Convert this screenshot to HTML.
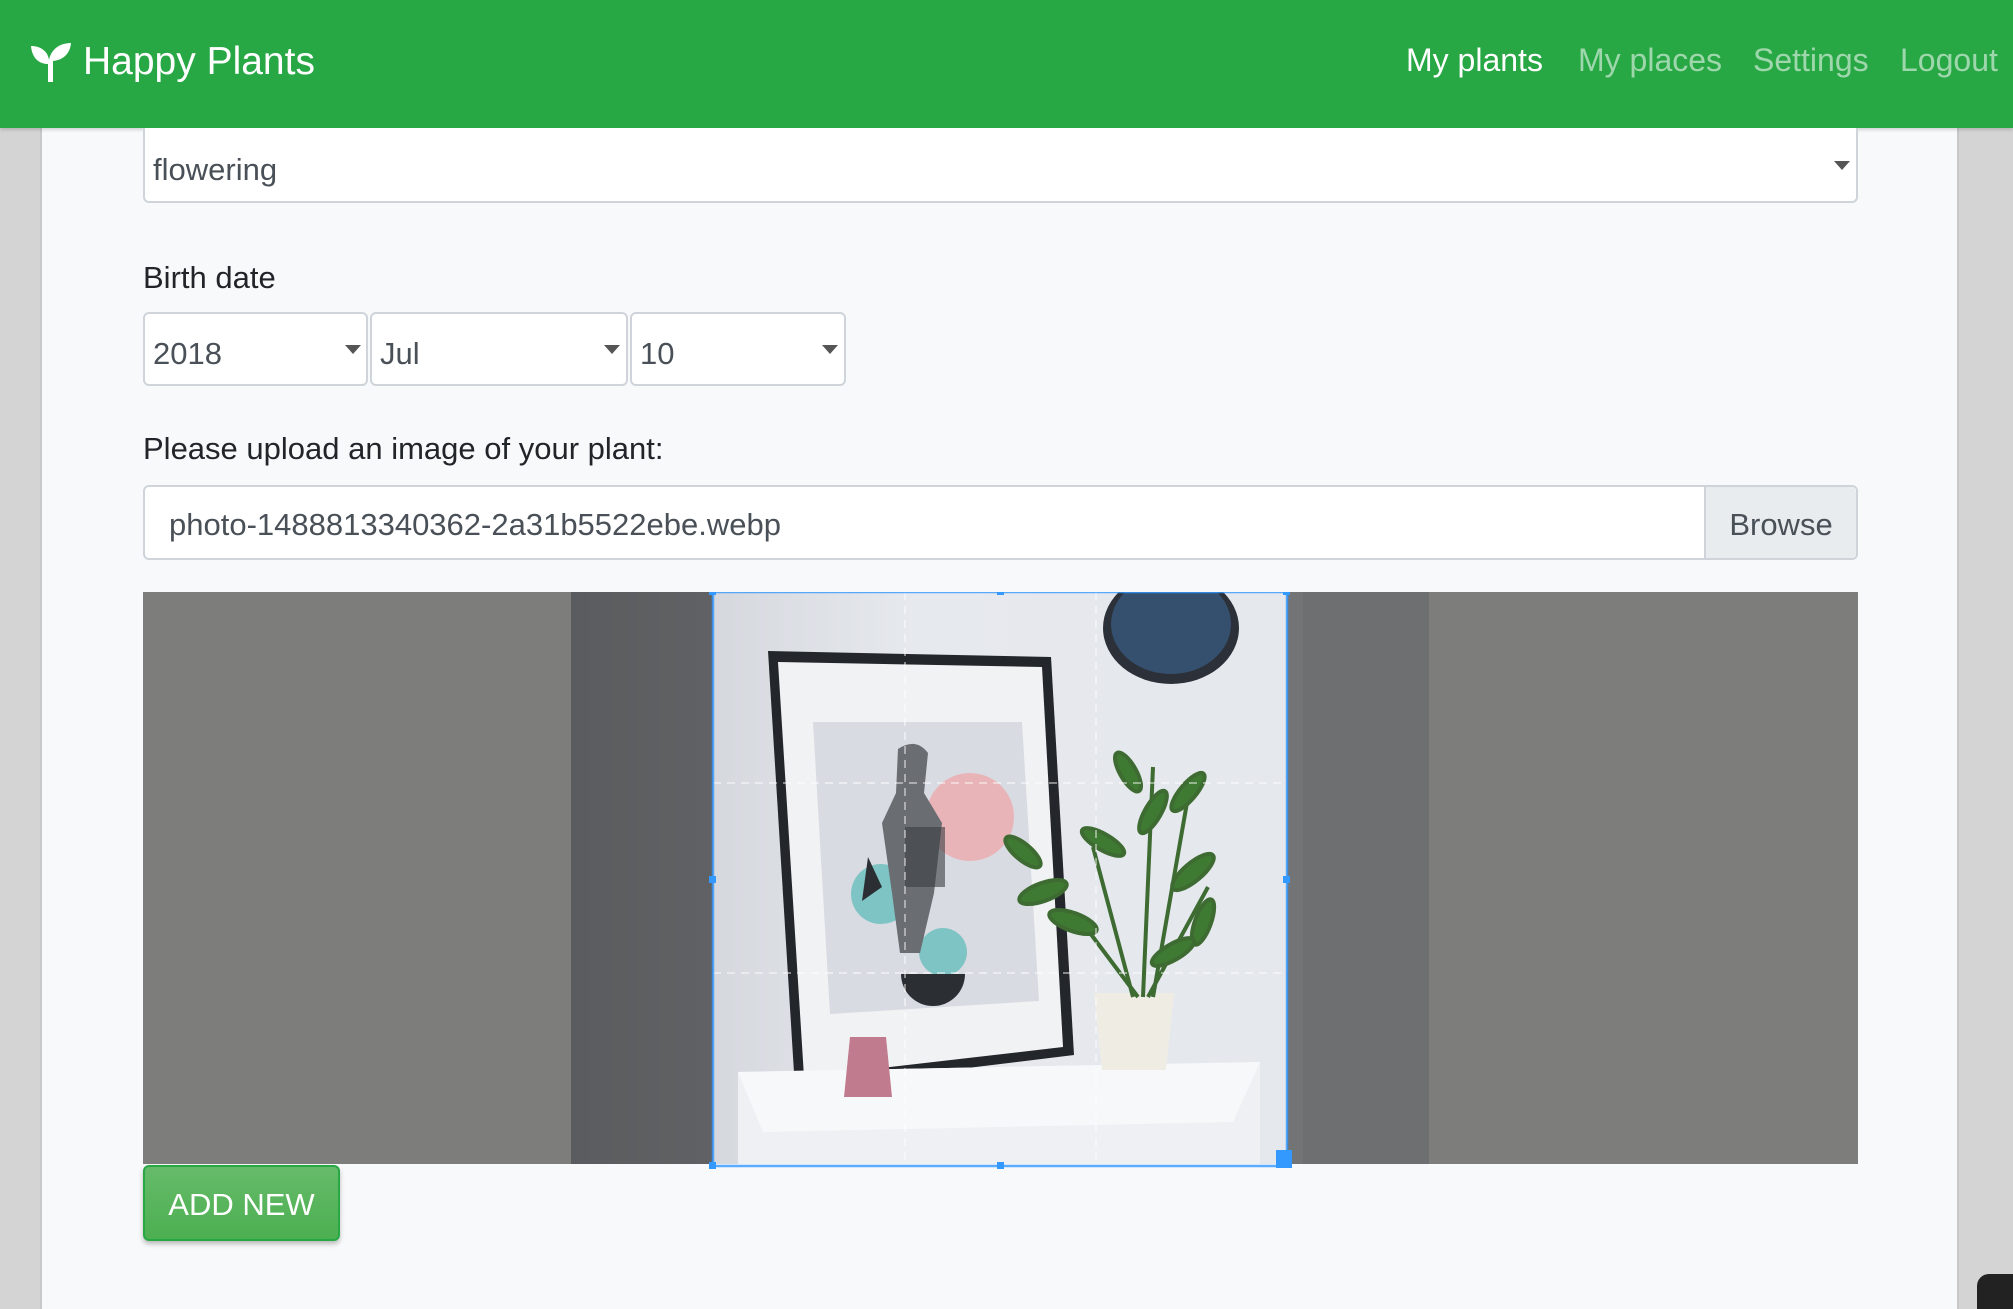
<!DOCTYPE html>
<html style="overflow:hidden;height:1309px"><head><meta charset="utf-8"><style>
*{box-sizing:border-box;margin:0;padding:0}
body{width:2013px;height:1309px;overflow:hidden;background:#d4d4d4;font-family:"Liberation Sans",sans-serif;position:relative}
.panel{position:absolute;left:40px;top:0;width:1919px;height:1309px;background:#f8f9fa;border-left:2px solid #c8c8c8;border-right:2px solid #c8c8c8}
.nav{position:absolute;left:0;top:0;width:2013px;height:128px;background:#28a745;box-shadow:0 2px 3px rgba(0,0,0,.15)}
.brand{position:absolute;left:83px;top:40px;color:#fff;font-size:39px}
.nl{position:absolute;top:42px;font-size:32px;color:rgba(255,255,255,.55)}
.box{position:absolute;background:#fff;border:2px solid #ced4da;border-radius:6px;font-size:31px;color:#495057;padding-left:8px;padding-top:10px;display:flex;align-items:center}
.arr{position:absolute;width:0;height:0;border-left:8px solid transparent;border-right:8px solid transparent;border-top:9px solid #555}
.lbl{position:absolute;left:143px;font-size:31px;color:#212529}
</style></head><body>
<div class="panel"></div>
<div class="nav">
<svg style="position:absolute;left:30px;top:42px" width="42" height="40" viewBox="0 0 42 40"><path d="M18 40V22C10 22 2 17 1 4 10 4 18 9 19 18 21 8 29 1 41 1 40 12 33 18 23 19V40Z" fill="#fff"/></svg>
<div class="brand">Happy Plants</div>
<div class="nl" style="left:1406px;color:#fff">My plants</div>
<div class="nl" style="left:1578px">My places</div>
<div class="nl" style="left:1753px">Settings</div>
<div class="nl" style="left:1900px">Logout</div>
</div>
<div class="box" style="left:143px;top:128px;width:1715px;height:75px;border-top:none;border-radius:0 0 6px 6px">flowering</div>
<div class="arr" style="left:1834px;top:161px"></div>
<div class="lbl" style="top:260px">Birth date</div>
<div class="box" style="left:143px;top:312px;width:225px;height:74px">2018</div>
<div class="arr" style="left:345px;top:345px"></div>
<div class="box" style="left:370px;top:312px;width:258px;height:74px">Jul</div>
<div class="arr" style="left:604px;top:345px"></div>
<div class="box" style="left:630px;top:312px;width:216px;height:74px">10</div>
<div class="arr" style="left:822px;top:345px"></div>
<div class="lbl" style="top:431px">Please upload an image of your plant:</div>
<div class="box" style="left:143px;top:485px;width:1715px;height:75px;padding-left:24px;padding-top:4px">photo-1488813340362-2a31b5522ebe.webp
<div style="position:absolute;right:0;top:0;height:71px;width:152px;background:#e9ecef;border-left:2px solid #ced4da;display:flex;align-items:center;justify-content:center;border-radius:0 5px 5px 0;padding-top:4px">Browse</div></div>
<svg style="position:absolute;left:143px;top:592px" width="1715" height="580" viewBox="0 0 1715 580">
<rect width="1715" height="572" fill="#7d7e7c"/>
<defs><linearGradient id="w" x1="0" x2="1"><stop offset="0" stop-color="#c9ccd2"/><stop offset=".4" stop-color="#e6e9ee"/><stop offset="1" stop-color="#e4e7ec"/></linearGradient></defs>
<rect x="428" width="858" height="572" fill="url(#w)"/>
<rect x="1160" width="126" height="572" fill="#dcdee2"/>
<ellipse cx="1028" cy="36" rx="68" ry="56" fill="#2c3038"/><ellipse cx="1028" cy="32" rx="60" ry="50" fill="#34506e"/>
<polygon points="625,59 908,65 931,463 652,497" fill="#23262b"/>
<polygon points="635,70 899,75 920,455 661,485" fill="#f1f2f4"/>
<polygon points="670,130 879,130 896,409 687,422" fill="#d8dbe2"/>
<circle cx="827" cy="225" r="44" fill="#e8b4b8"/>
<circle cx="738" cy="302" r="30" fill="#7ec4c4"/>
<circle cx="800" cy="360" r="24" fill="#7ec4c4"/>
<path d="M755 157q18-12 30 4l-4 40 18 30 -8 70 -14 60 -20 0 -8-60 -10-70 14-30z" fill="#6a6d72"/>
<path d="M762 235h40v60h-40z" fill="#3a3d42" opacity=".6"/>
<path d="M758 382h64a32 32 0 0 1-64 0z" fill="#2b2e33"/>
<path d="M725 265l14 30-20 14z" fill="#2b2e33"/>
<polygon points="595,480 1117,470 1117,572 595,572" fill="#eef0f3"/>
<polygon points="595,480 1117,470 1090,530 620,540" fill="#f7f8fa"/>
<path d="M707 445h36l6 60h-48z" fill="#c07c8e"/>
<path d="M951 401h80l-8 77h-64z" fill="#efece4"/>
<g stroke="#3d6b32" stroke-width="4" fill="#3f7a33">
<path d="M990 405l-40-150M1000 405l10-230M1010 405l35-200M995 405l-60-80M1005 405l60-110"/>
<ellipse cx="900" cy="300" rx="25" ry="9" transform="rotate(-20 900 300)"/><ellipse cx="930" cy="330" rx="25" ry="9" transform="rotate(20 930 330)"/>
<ellipse cx="1050" cy="280" rx="26" ry="9" transform="rotate(-40 1050 280)"/><ellipse cx="1010" cy="220" rx="24" ry="8" transform="rotate(-60 1010 220)"/>
<ellipse cx="1045" cy="200" rx="24" ry="8" transform="rotate(-50 1045 200)"/><ellipse cx="985" cy="180" rx="22" ry="8" transform="rotate(60 985 180)"/>
<ellipse cx="960" cy="250" rx="24" ry="8" transform="rotate(30 960 250)"/><ellipse cx="1060" cy="330" rx="24" ry="8" transform="rotate(-70 1060 330)"/>
<ellipse cx="880" cy="260" rx="22" ry="8" transform="rotate(40 880 260)"/><ellipse cx="1030" cy="360" rx="24" ry="8" transform="rotate(-30 1030 360)"/>
</g>
<rect x="428" width="142" height="572" fill="rgba(0,0,0,.55)"/>
<rect x="1144" width="142" height="572" fill="rgba(0,0,0,.5)"/>
<g stroke="#fff" stroke-opacity=".6" stroke-dasharray="8 6" stroke-width="1.5">
<path d="M762 0v572M953 0v572M570 191h574M570 381h574"/></g>
<rect x="570" y="0" width="574" height="574" fill="none" stroke="#39f" stroke-width="2.5" stroke-opacity=".8"/>
<g fill="#39f"><rect x="566" y="-4" width="7" height="7"/><rect x="854" y="-4" width="7" height="7"/><rect x="1140" y="-4" width="7" height="7"/>
<rect x="566" y="284" width="7" height="7"/><rect x="1140" y="284" width="7" height="7"/>
<rect x="566" y="570" width="7" height="7"/><rect x="854" y="570" width="7" height="7"/><rect x="1133" y="558" width="16" height="18"/></g>
</svg>
<div style="position:absolute;left:143px;top:1165px;width:197px;height:76px;background:linear-gradient(#66bb6a,#4caf50);border:2px solid #28a745;border-radius:6px;color:#fff;font-size:31px;display:flex;align-items:center;justify-content:center;box-shadow:0 3px 5px rgba(0,0,0,.25);padding-top:4px">ADD NEW</div>
<div style="position:absolute;left:1977px;top:1274px;width:36px;height:35px;background:#222;border-radius:12px 0 0 0"></div>
</body></html>
